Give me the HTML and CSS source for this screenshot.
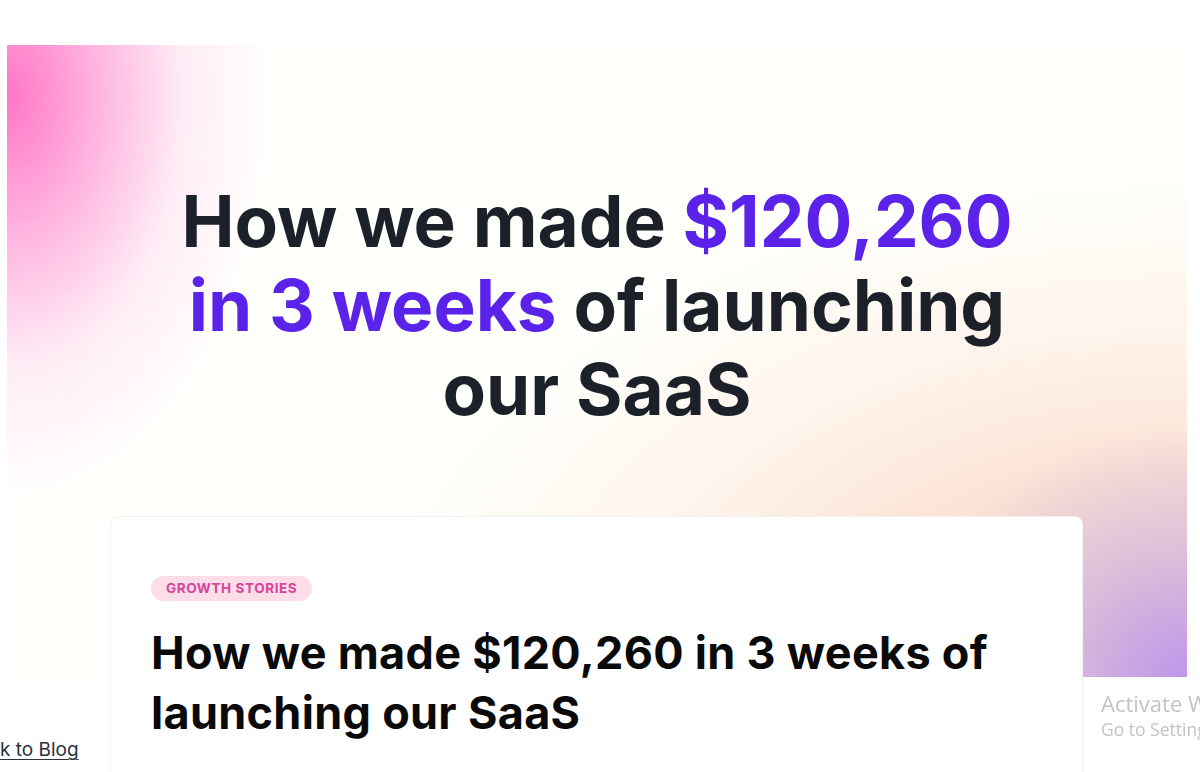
FILE: index.html
```html
<!DOCTYPE html>
<html lang="en">
<head>
<meta charset="utf-8">
<title>How we made $120,260 in 3 weeks of launching our SaaS</title>
<link rel="stylesheet" href="styles.css">
</head>
<body>
  <header class="hero">
    <h1 class="hero-title">How we made <span class="accent">$120,260</span><br><span class="accent">in 3 weeks</span> of launching<br>our SaaS</h1>
  </header>
  <div class="content">
    <aside class="side">
      <a class="back-link" href="#">Back to Blog</a>
    </aside>
    <article class="card">
      <span class="badge">Growth Stories</span>
      <h2 class="card-title">How we made $120,260 in 3 weeks of launching our SaaS</h2>
    </article>
  </div>
  <div class="watermark">
    <div class="wm-title">Activate Windows</div>
    <div class="wm-sub">Go to Settings to activate Windows.</div>
  </div>
</body>
</html>
```
FILE: styles.css
```css
html, body {
  margin: 0;
  padding: 0;
  overflow: hidden;
}
body {
  background: #ffffff;
  font-family: Inter, "Noto Sans", "Liberation Sans", sans-serif;
  color: #1c2029;
}
.hero {
  margin: 45px 13px 0 7px;
  height: 632px;
  box-sizing: border-box;
  padding-top: 134px;
  background:
    radial-gradient(ellipse 260px 400px at 0 50px, rgba(255, 110, 196, 0.95) 0%, rgba(255, 130, 205, 0.6) 35%, rgba(255, 170, 220, 0.22) 68%, rgba(255, 255, 255, 0) 100%),
    radial-gradient(ellipse 280px 250px at 100% 100%, rgba(190, 150, 235, 1) 0%, rgba(205, 170, 225, 0.6) 50%, rgba(230, 200, 215, 0) 100%),
    radial-gradient(ellipse 820px 500px at 100% 100%, rgba(248, 212, 198, 1) 0%, rgba(251, 222, 206, 0.9) 40%, rgba(253, 234, 220, 0.5) 70%, rgba(253, 240, 230, 0) 100%),
    #fffffc;
}
.hero-title {
  margin: 0;
  text-align: center;
  font-size: 71px;
  line-height: 84px;
  font-weight: 700;
  letter-spacing: 0;
  color: #1c2029;
}
.accent {
  color: #5b22ea;
}
.content {
  display: flex;
  margin-top: -161px;
  position: relative;
}
.side {
  width: 110px;
  flex: none;
  padding-top: 220px;
}
.back-link {
  display: inline-block;
  margin-left: -34px;
  font-size: 19px;
  line-height: 28px;
  color: #2b3240;
  text-decoration: underline;
  text-underline-offset: 3px;
  text-decoration-thickness: 1px;
  white-space: nowrap;
}
.card {
  width: 973px;
  box-sizing: border-box;
  height: 400px;
  background: #ffffff;
  border: 1px solid #f2f2f2;
  border-radius: 8px;
  padding: 59px 40px 0 40px;
}
.badge {
  display: inline-block;
  height: 25px;
  line-height: 25px;
  padding: 0 15px;
  border-radius: 13px;
  background: #fcdde8;
  color: #d6449c;
  font-size: 13.5px;
  font-weight: 700;
  letter-spacing: 0.6px;
  text-transform: uppercase;
}
.card-title {
  margin: 22px 0 0;
  font-size: 45px;
  line-height: 60px;
  font-weight: 700;
  color: #0a0a0a;
  letter-spacing: 0.3px;
  max-width: 880px;
}
.watermark {
  position: fixed;
  left: 1101px;
  top: 688px;
  font-family: "Open Sans", "DejaVu Sans", sans-serif;
  color: #c3c3c3;
  white-space: nowrap;
}
.wm-title {
  font-size: 22px;
  line-height: 30px;
}
.wm-sub {
  font-size: 17.5px;
  line-height: 22px;
}
```
